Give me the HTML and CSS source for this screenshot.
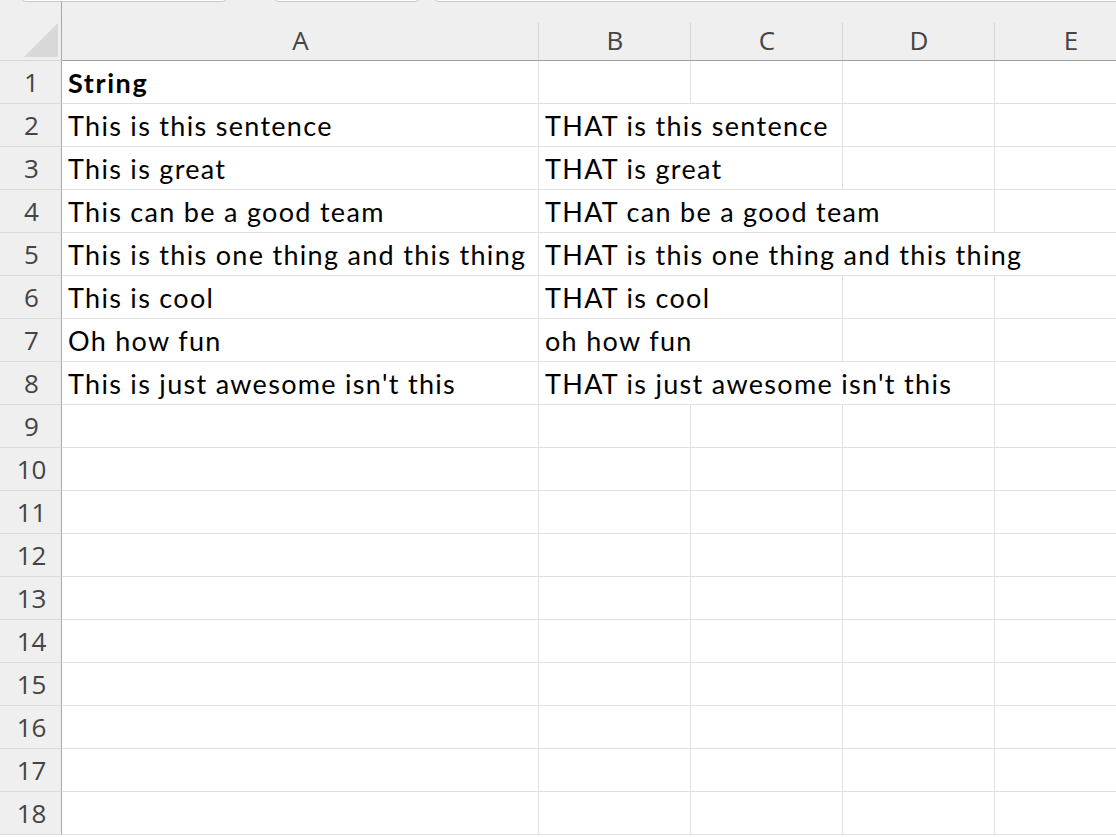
FILE: index.html
```html
<!DOCTYPE html>
<html>
<head>
<meta charset="utf-8">
<link rel="stylesheet" href="styles.css">
</head>
<body>
<div class="sheet">
  <div class="tabs">
    <div class="tab t1"></div>
    <div class="tab t2"></div>
    <div class="tab t3"></div>
  </div>
  <div class="grid">
    <div class="corner"><div class="tri"></div></div>
    <div class="colh">A</div>
    <div class="colh">B</div>
    <div class="colh">C</div>
    <div class="colh">D</div>
    <div class="colh last">E</div>

    <div class="rowh">1</div><div class="cell bold">String</div><div class="cell"></div><div class="cell"></div><div class="cell"></div><div class="cell"></div>
    <div class="rowh">2</div><div class="cell">This is this sentence</div><div class="cell span">THAT is this sentence</div><div class="cell"></div><div class="cell"></div>
    <div class="rowh">3</div><div class="cell">This is great</div><div class="cell span">THAT is great</div><div class="cell"></div><div class="cell"></div>
    <div class="rowh">4</div><div class="cell">This can be a good team</div><div class="cell span3">THAT can be a good team</div><div class="cell"></div>
    <div class="rowh">5</div><div class="cell">This is this one thing and this thing</div><div class="cell span4">THAT is this one thing and this thing</div>
    <div class="rowh">6</div><div class="cell">This is cool</div><div class="cell span">THAT is cool</div><div class="cell"></div><div class="cell"></div>
    <div class="rowh">7</div><div class="cell">Oh how fun</div><div class="cell span">oh how fun</div><div class="cell"></div><div class="cell"></div>
    <div class="rowh">8</div><div class="cell">This is just awesome isn't this</div><div class="cell span3">THAT is just awesome isn't this</div><div class="cell"></div>
    <div class="rowh">9</div><div class="cell"></div><div class="cell"></div><div class="cell"></div><div class="cell"></div><div class="cell"></div>
    <div class="rowh">10</div><div class="cell"></div><div class="cell"></div><div class="cell"></div><div class="cell"></div><div class="cell"></div>
    <div class="rowh">11</div><div class="cell"></div><div class="cell"></div><div class="cell"></div><div class="cell"></div><div class="cell"></div>
    <div class="rowh">12</div><div class="cell"></div><div class="cell"></div><div class="cell"></div><div class="cell"></div><div class="cell"></div>
    <div class="rowh">13</div><div class="cell"></div><div class="cell"></div><div class="cell"></div><div class="cell"></div><div class="cell"></div>
    <div class="rowh">14</div><div class="cell"></div><div class="cell"></div><div class="cell"></div><div class="cell"></div><div class="cell"></div>
    <div class="rowh">15</div><div class="cell"></div><div class="cell"></div><div class="cell"></div><div class="cell"></div><div class="cell"></div>
    <div class="rowh">16</div><div class="cell"></div><div class="cell"></div><div class="cell"></div><div class="cell"></div><div class="cell"></div>
    <div class="rowh">17</div><div class="cell"></div><div class="cell"></div><div class="cell"></div><div class="cell"></div><div class="cell"></div>
    <div class="rowh">18</div><div class="cell"></div><div class="cell"></div><div class="cell"></div><div class="cell"></div><div class="cell"></div>
  </div>
</div>
</body>
</html>
```
FILE: styles.css
```css
html, body {
  margin: 0;
  padding: 0;
  background: #ffffff;
  overflow: hidden;
}
.sheet {
  position: relative;
  width: 1116px;
  height: 837px;
  overflow: hidden;
}
.tabs {
  position: absolute;
  top: 0;
  left: 0;
  right: 0;
  height: 3px;
  z-index: 2;
}
.tab {
  position: absolute;
  top: -10px;
  height: 12px;
  background: #ffffff;
  border: 1px solid #c8c8c8;
  border-radius: 0 0 6px 6px;
  box-sizing: border-box;
}
.t1 { left: 20px; width: 208px; }
.t2 { left: 273px; width: 148px; }
.t3 { left: 433px; width: 720px; }
.grid {
  display: grid;
  grid-template-columns: 62px 477px 152px 152px 152px 152px;
  grid-template-rows: 61px repeat(18, 43px);
  font-family: Lato, "Open Sans", sans-serif;
}
.grid > div {
  box-sizing: border-box;
}
.corner {
  position: relative;
  background: #efefef;
  border-right: 1px solid #a8a8a8;
  border-bottom: 1px solid #d6d6d6;
}
.tri {
  position: absolute;
  left: 24px;
  top: 23px;
  width: 34px;
  height: 34px;
  background: #d8d8d8;
  clip-path: polygon(100% 0, 100% 100%, 0 100%);
}
.colh {
  position: relative;
  background: #efefef;
  border-bottom: 1px solid #a0a0a0;
  color: #444444;
  font-family: "Open Sans", "Noto Sans", sans-serif;
  font-size: 26px;
  display: flex;
  align-items: center;
  justify-content: center;
  padding-top: 20px;
}
.colh::after {
  content: "";
  position: absolute;
  right: 0;
  top: 23px;
  bottom: 0;
  width: 1px;
  background: #d4d4d4;
}
.colh.last::after { display: none; }
.rowh {
  background: #efefef;
  border-right: 1px solid #a8a8a8;
  border-bottom: 1px solid #dadada;
  color: #444444;
  font-family: "Open Sans", "Noto Sans", sans-serif;
  font-size: 26px;
  display: flex;
  align-items: center;
  justify-content: center;
  padding-left: 2px;
}
.cell {
  border-right: 1px solid #e1e1e1;
  border-bottom: 1px solid #e1e1e1;
  color: #000000;
  font-size: 27px;
  letter-spacing: 1.3px;
  line-height: 44px;
  padding-left: 6px;
  white-space: nowrap;
  overflow: visible;
}
.bold { font-weight: 700; letter-spacing: 1.6px; }
.span { grid-column: span 2; border-right: 1px solid #e1e1e1; }
.span3 { grid-column: span 3; }
.span4 { grid-column: span 4; border-right: none; }
```
